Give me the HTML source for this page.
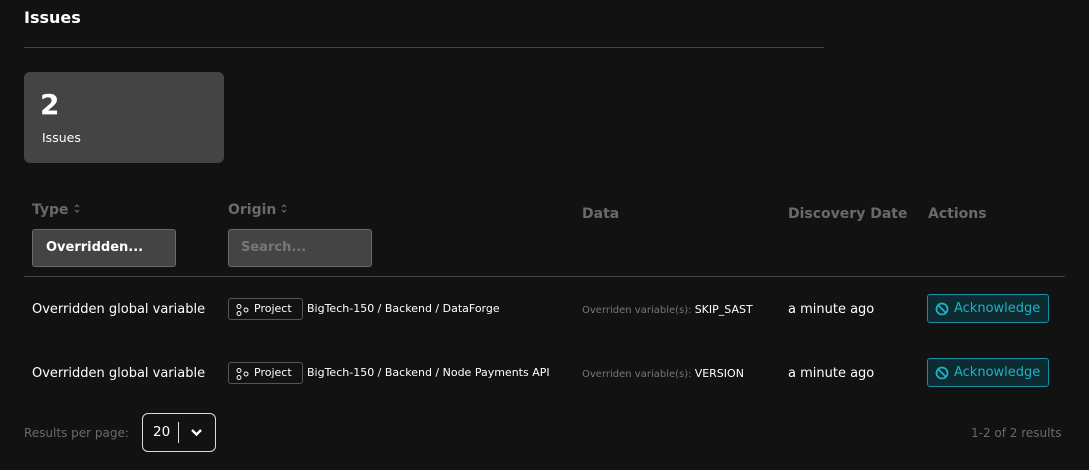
<!DOCTYPE html><html><head><style>
body{margin:0;width:1089px;height:470px;background:#121212;font-family:"DejaVu Sans","Liberation Sans",sans-serif;color:#fff;position:relative;overflow:hidden}
.a{position:absolute;white-space:nowrap}
.h{font-weight:bold;color:#6a6a6a;font-family:"DejaVu Sans",sans-serif;font-size:14px}
.in{position:absolute;background:#444;border:1px solid #6a6a6a;border-radius:3px;width:144px;height:38px;box-sizing:border-box;font-size:13px;font-weight:bold;line-height:36px;padding-left:13px}
.r{font-size:13px}
.badge{position:absolute;border:1px solid #555;border-radius:3px;height:22px;box-sizing:border-box;font-size:11px;line-height:20px;padding:0 0 0 25px;left:228px;width:75px}
.badge svg{position:absolute;left:7px;top:5px}
.ack{position:absolute;left:927px;width:122px;height:29px;box-sizing:border-box;border:1px solid #1a8ea3;background:#0e2b31;border-radius:3px;color:#1fb0c9;font-size:13px;line-height:28px;padding-left:26px}
.ack svg{position:absolute;left:7px;top:7px}
</style></head><body>
<div class="a" style="left:24px;top:8px;font-weight:bold;font-size:16px">Issues</div>
<div class="a" style="left:24px;top:47px;width:800px;height:1px;background:#444"></div>
<div class="a" style="left:24px;top:72px;width:200px;height:91px;background:#444;border-radius:6px"></div>
<div class="a" style="left:40px;top:88px;font-size:28px;font-weight:bold">2</div>
<div class="a" style="left:42px;top:130px;font-size:12.5px">Issues</div>
<div class="a h" style="left:32px;top:202px">Type<svg style="margin-left:5px" width="6" height="11" viewBox="0 0 6 11"><path d="M1 4L3 2L5 4M1 7L3 9L5 7" fill="none" stroke="#6a6a6a" stroke-width="1.2"/></svg></div>
<div class="a h" style="left:228px;top:202px">Origin<svg style="margin-left:5px" width="6" height="11" viewBox="0 0 6 11"><path d="M1 4L3 2L5 4M1 7L3 9L5 7" fill="none" stroke="#6a6a6a" stroke-width="1.2"/></svg></div>
<div class="a h" style="left:582px;top:206px">Data</div>
<div class="a h" style="left:788px;top:206px">Discovery Date</div>
<div class="a h" style="left:928px;top:206px">Actions</div>
<div class="in" style="left:32px;top:229px">Overridden...</div>
<div class="in" style="left:228px;top:229px;color:#777;padding-left:12px">Search...</div>
<div class="a" style="left:24px;top:276px;width:1041px;height:1px;background:#444"></div>

<div class="a r" style="left:32px;top:302px">Overridden global variable</div>
<div class="badge" style="top:298px"><svg width="14" height="12" viewBox="0 0 14 12"><circle cx="3" cy="2.5" r="2" fill="none" stroke="#fff" stroke-width="1"/><circle cx="3" cy="9.5" r="2" fill="none" stroke="#fff" stroke-width="1"/><circle cx="10" cy="6" r="2" fill="none" stroke="#fff" stroke-width="1"/></svg>Project</div>
<div class="a" style="left:307px;top:302px;font-size:11px">BigTech-150 / Backend / DataForge</div>
<div class="a" style="left:582px;top:303px;color:#777;font-size:10px">Overriden variable(s): <span style="color:#fff;font-size:11px">SKIP_SAST</span></div>
<div class="a r" style="left:788px;top:302px">a minute ago</div>
<div class="ack" style="top:294px"><svg width="14" height="14" viewBox="0 0 14 14"><circle cx="7" cy="7" r="5.5" fill="none" stroke="#1fb0c9" stroke-width="1.8"/><path d="M3.2 3.2L10.8 10.8" stroke="#1fb0c9" stroke-width="1.8"/></svg>Acknowledge</div>

<div class="a r" style="left:32px;top:366px">Overridden global variable</div>
<div class="badge" style="top:362px"><svg width="14" height="12" viewBox="0 0 14 12"><circle cx="3" cy="2.5" r="2" fill="none" stroke="#fff" stroke-width="1"/><circle cx="3" cy="9.5" r="2" fill="none" stroke="#fff" stroke-width="1"/><circle cx="10" cy="6" r="2" fill="none" stroke="#fff" stroke-width="1"/></svg>Project</div>
<div class="a" style="left:307px;top:366px;font-size:11px">BigTech-150 / Backend / Node Payments API</div>
<div class="a" style="left:582px;top:367px;color:#777;font-size:10px">Overriden variable(s): <span style="color:#fff;font-size:11px">VERSION</span></div>
<div class="a r" style="left:788px;top:366px">a minute ago</div>
<div class="ack" style="top:358px"><svg width="14" height="14" viewBox="0 0 14 14"><circle cx="7" cy="7" r="5.5" fill="none" stroke="#1fb0c9" stroke-width="1.8"/><path d="M3.2 3.2L10.8 10.8" stroke="#1fb0c9" stroke-width="1.8"/></svg>Acknowledge</div>

<div class="a" style="left:24px;top:426px;font-size:12px;color:#6a6a6a">Results per page:</div>
<div class="a" style="left:142px;top:413px;width:74px;height:39px;box-sizing:border-box;border:1px solid #ddd;border-radius:6px"></div>
<div class="a" style="left:153px;top:424px;font-size:13.5px">20</div>
<div class="a" style="left:178px;top:422px;width:1px;height:21px;background:#ddd"></div>
<svg class="a" style="left:190px;top:428px" width="13" height="9" viewBox="0 0 13 9"><path d="M2 2L6.5 6.5L11 2" fill="none" stroke="#fff" stroke-width="2.4"/></svg>
<div class="a" style="left:971px;top:426px;font-size:12px;color:#6a6a6a">1-2 of 2 results</div>
</body></html>
